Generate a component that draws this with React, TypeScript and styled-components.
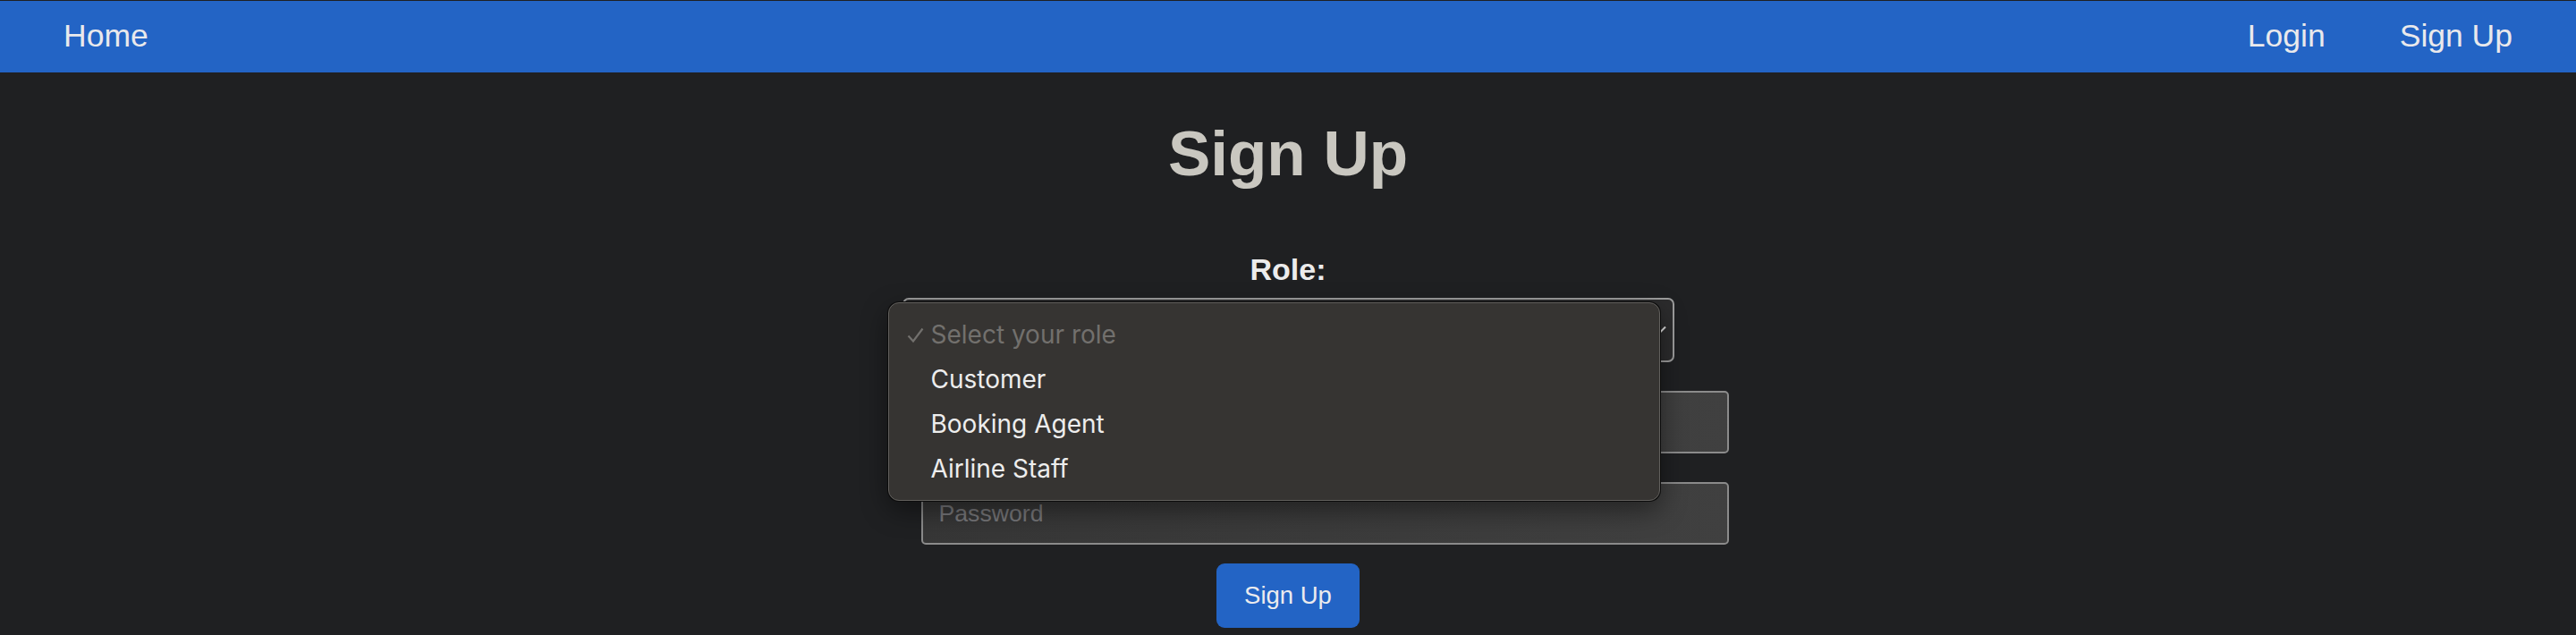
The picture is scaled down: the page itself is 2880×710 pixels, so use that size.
import React from 'react';
import styled, { createGlobalStyle } from 'styled-components';

const GlobalStyle = createGlobalStyle`
  html, body {
    margin: 0;
    padding: 0;
    background: #1f2022;
    font-family: "Liberation Sans", Arial, sans-serif;
  }
  * {
    box-sizing: border-box;
  }
`;

const Navbar = styled.nav`
  margin-top: 1px;
  height: 80px;
  background: #2364c5;
  display: flex;
  align-items: center;
  justify-content: space-between;
  padding: 0 71px 2px;
`;

const NavGroup = styled.div`
  display: flex;
  align-items: center;
  gap: 83px;
`;

const NavLink = styled.a`
  color: #e9e9ec;
  font-size: 35.5px;
  text-decoration: none;
  cursor: pointer;
`;

const Main = styled.main`
  display: flex;
  flex-direction: column;
  align-items: center;
  padding-top: 55px;
`;

const Title = styled.h1`
  margin: 0;
  font-size: 71px;
  line-height: 71px;
  font-weight: 700;
  color: #c9c7c0;
`;

const RoleLabel = styled.label`
  margin-top: 77px;
  font-size: 34px;
  line-height: 34px;
  font-weight: 700;
  color: #ececec;
`;

const Form = styled.form`
  width: 863px;
  margin-top: 15px;
  display: flex;
  flex-direction: column;
`;

const SelectWrap = styled.div`
  position: relative;
`;

// the closed select; its label is covered by the open list
const SelectTrigger = styled.div`
  height: 72px;
  border: 2px solid #9d9d9d;
  border-radius: 7px;
  background: #2c2c2d;
  display: flex;
  align-items: center;
  justify-content: flex-end;
  padding: 0 7px 0 18px;
`;

const Chevron = styled.svg`
  width: 16px;
  height: 10px;
`;

const Listbox = styled.ul`
  position: absolute;
  top: 5px;
  left: -16px;
  width: 863px;
  margin: 0;
  padding: 10px 0;
  list-style: none;
  background: #363432;
  border: 1px solid #62605d;
  border-radius: 12px;
  box-shadow: 0 0 0 1px #0c0c0c, 0 10px 30px rgba(0, 0, 0, 0.45);
  z-index: 10;
`;

const Option = styled.li<{ $placeholder?: boolean }>`
  height: 50px;
  display: flex;
  align-items: center;
  padding-left: 20px;
  font-family: Inter, "Noto Sans", sans-serif;
  font-size: 28px;
  color: ${(p) => (p.$placeholder ? '#72706d' : '#ededed')};
`;

const CheckSlot = styled.span`
  width: 27px;
  display: flex;
  align-items: center;
`;

const Field = styled.input`
  height: 70px;
  width: 903px;
  margin-left: 21px;
  margin-top: 32px;
  border: 2px solid #8b8b8b;
  border-radius: 5px;
  background: linear-gradient(100deg, #363636, #404040);
  color: #e6e6e6;
  font-family: "Liberation Sans", Arial, sans-serif;
  font-size: 26.67px;
  padding: 0 18px;
  outline: none;

  &::placeholder {
    color: #77777a;
  }
`;

const SubmitButton = styled.button`
  align-self: center;
  margin-top: 21px;
  width: 160px;
  height: 72px;
  border: none;
  border-radius: 9px;
  background: #2364c5;
  color: #ebebee;
  font-family: "Liberation Sans", Arial, sans-serif;
  font-size: 27.5px;
  cursor: pointer;
`;

const roles = ['Customer', 'Booking Agent', 'Airline Staff'];

const App: React.FC = () => {
  return (
    <>
      <GlobalStyle />
      <Navbar>
        <NavLink>Home</NavLink>
        <NavGroup>
          <NavLink>Login</NavLink>
          <NavLink>Sign Up</NavLink>
        </NavGroup>
      </Navbar>
      <Main>
        <Title>Sign Up</Title>
        <RoleLabel>Role:</RoleLabel>
        <Form onSubmit={(e) => e.preventDefault()}>
          <SelectWrap>
            <SelectTrigger>
              <Chevron viewBox="0 0 16 10">
                <path d="M1 1.5 L8 8.5 L15 1.5" fill="none" stroke="#dcdcdc" strokeWidth="2" />
              </Chevron>
            </SelectTrigger>
            <Listbox>
              <Option $placeholder>
                <CheckSlot>
                  <svg width="19" height="17" viewBox="0 0 19 17">
                    <path d="M1.5 9.5 L7 15.5 L17.5 1.5" fill="none" stroke="#72706d" strokeWidth="2.2" />
                  </svg>
                </CheckSlot>
                Select your role
              </Option>
              {roles.map((r) => (
                <Option key={r}>
                  <CheckSlot />
                  {r}
                </Option>
              ))}
            </Listbox>
          </SelectWrap>
          <Field type="text" placeholder="Username" />
          <Field type="password" placeholder="Password" />
          <SubmitButton type="submit">Sign Up</SubmitButton>
        </Form>
      </Main>
    </>
  );
};

export default App;
